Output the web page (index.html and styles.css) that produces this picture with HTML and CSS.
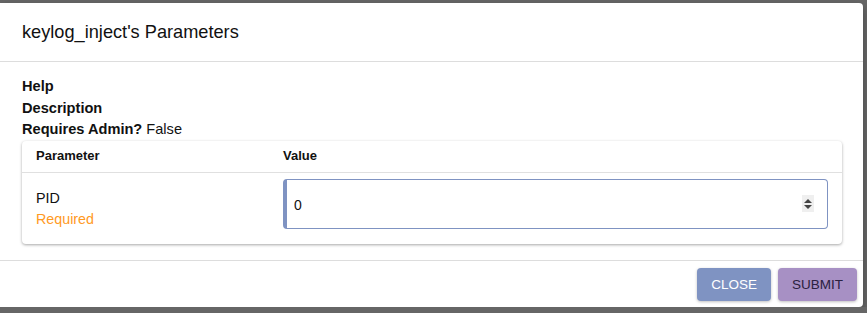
FILE: index.html
```html
<!DOCTYPE html>
<html lang="en">
<head>
  <meta charset="UTF-8">
  <meta name="viewport" content="width=device-width, initial-scale=1.0">
  <title>keylog_inject's Parameters</title>
  <link rel="stylesheet" href="styles.css">
</head>
<body>
  <div class="dialog">
    <div class="dialog-title">keylog_inject's Parameters</div>
    <div class="dialog-content">
      <div class="info"><b>Help</b></div>
      <div class="info"><b>Description</b></div>
      <div class="info"><b>Requires Admin?</b> False</div>
      <div class="table-card">
        <div class="table-row table-head">
          <div class="col-name">Parameter</div>
          <div class="col-value">Value</div>
        </div>
        <div class="table-row table-body">
          <div class="col-name">
            <div>PID</div>
            <div class="required">Required</div>
          </div>
          <div class="col-value">
            <div class="num-input">
              <input type="text" value="0">
              <span class="spinner">
                <span class="arrow-up"></span>
                <span class="arrow-down"></span>
              </span>
            </div>
          </div>
        </div>
      </div>
    </div>
    <div class="dialog-actions">
      <button class="btn btn-close">Close</button>
      <button class="btn btn-submit">Submit</button>
    </div>
  </div>
</body>
</html>
```

FILE: styles.css
```css
body {
  margin: 0;
  background-color: #666;
  font-family: "Liberation Sans", Arial, sans-serif;
  color: #111;
}
.dialog {
  background-color: #fff;
  width: 863px;
  height: 304px;
  margin-top: 3px;
  border-radius: 0 4px 4px 0;
  box-shadow: 0px 4px 10px rgba(0, 0, 0, 0.3);
  display: flex;
  flex-direction: column;
}
.dialog-title {
  font-size: 18.2px;
  padding: 19px 22px 0;
  height: 39px;
  border-bottom: 1px solid #ddd;
}
.dialog-content {
  padding: 14px 22px 0;
  height: 184px;
  border-bottom: 1px solid #ddd;
}
.info {
  font-size: 14.6px;
  line-height: 21.5px;
}
.table-card {
  width: 820px;
  border-radius: 4px;
  box-shadow: 0px 1px 3px rgba(0, 0, 0, 0.35);
  font-size: 14px;
}
.table-row {
  display: flex;
}
.table-head {
  align-items: center;
  font-weight: bold;
  font-size: 13px;
  height: 29px;
  padding-bottom: 2px;
  border-bottom: 1px solid #e0e0e0;
}
.col-name {
  width: 247px;
  padding-left: 14px;
}
.col-value {
  flex: 1;
  padding-right: 14px;
}
.table-body {
  height: 71px;
}
.table-body .col-name {
  font-size: 14.3px;
  line-height: 21.5px;
  padding-top: 15px;
}
.required {
  color: #ff9a1f;
}
.num-input {
  display: flex;
  align-items: center;
  height: 48px;
  margin-top: 6px;
  border: 1px solid #7f93c2;
  border-left: 4px solid #7f93c2;
  border-radius: 4px;
}
.num-input input {
  flex: 1;
  border: none;
  outline: none;
  font-family: inherit;
  font-size: 14px;
  padding: 2px 0 0 7px;
  color: #111;
  background: transparent;
}
.spinner {
  width: 12px;
  height: 17px;
  background-color: #efefef;
  margin-right: 13px;
  display: flex;
  flex-direction: column;
  align-items: center;
  justify-content: center;
  gap: 2px;
}
.arrow-up {
  border-left: 4px solid transparent;
  border-right: 4px solid transparent;
  border-bottom: 4px solid #444;
}
.arrow-down {
  border-left: 4px solid transparent;
  border-right: 4px solid transparent;
  border-top: 4px solid #444;
}
.dialog-actions {
  display: flex;
  justify-content: flex-end;
  gap: 7px;
  padding: 7px 6px 0 0;
}
.btn {
  height: 33px;
  padding: 0 14px 1px;
  border: none;
  border-radius: 4px;
  font-family: inherit;
  font-size: 13.5px;
  text-transform: uppercase;
  box-shadow: 0px 1px 3px rgba(0, 0, 0, 0.25);
  cursor: pointer;
}
.btn-close {
  background-color: #7f93c2;
  color: #fff;
}
.btn-submit {
  background-color: #a790c4;
  color: #2b2140;
}
```
